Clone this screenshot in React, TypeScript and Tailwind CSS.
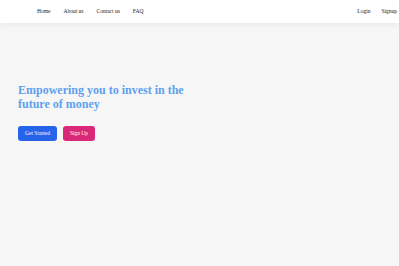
export default function App() {
  return (
    <div className="min-h-[266px] w-full bg-[#f6f6f6]" style={{ fontFamily: '"Liberation Serif", "Times New Roman", serif' }}>
      <nav className="relative h-[23px] bg-white flex items-center justify-between pl-[37px] pr-[2px] text-[5.5px] text-[#222] shadow-[0_2px_6px_rgba(0,0,0,0.05)]">
        <div className="flex gap-[13px]">
          <span>Home</span>
          <span>About us</span>
          <span>Contact us</span>
          <span>FAQ</span>
        </div>
        <div className="flex gap-[11px]">
          <span>Login</span>
          <span>Signup</span>
        </div>
      </nav>
      <main className="pl-[18px] pt-[60px]">
        <h1 className="text-[12px] leading-[14px] font-bold text-[#5ea1ee] w-[180px]">
          Empowering you to invest in the future of money
        </h1>
        <div className="mt-[15px] flex gap-[6px]">
          <button className="h-[15px] w-[39px] rounded-[3px] bg-[#2563eb] text-white text-[5.5px]">Get Started</button>
          <button className="h-[15px] w-[32px] rounded-[3px] bg-[#db2777] text-white text-[5.5px]">Sign Up</button>
        </div>
      </main>
    </div>
  );
}
